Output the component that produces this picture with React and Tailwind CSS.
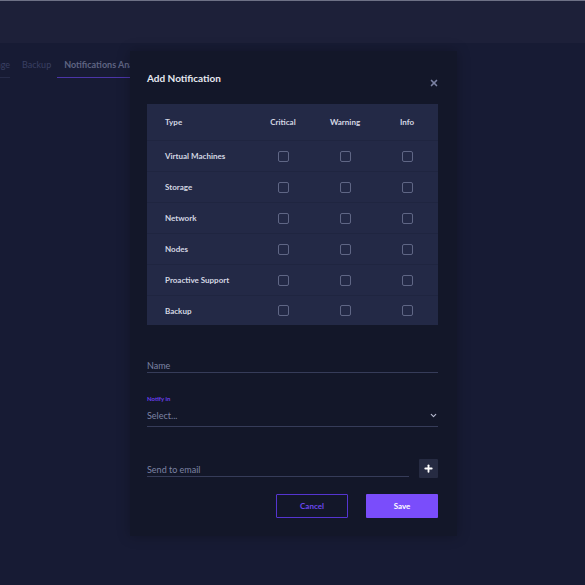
import { ChevronDown, Plus, X } from 'lucide-react'

const types = ['Virtual Machines', 'Storage', 'Network', 'Nodes', 'Proactive Support', 'Backup']

function Box() {
  return <div className="w-[11px] h-[11px] rounded-[2px] border border-[#5f6685]" />
}

export default function App() {
  return (
    <div className="relative w-[585px] h-[585px] overflow-hidden bg-[#171b34] font-['Lato',sans-serif]">
      {/* page header */}
      <div className="h-[1px] bg-[#6e7186]" />
      <div className="h-[42px] bg-[#1d2039]" />

      {/* tabs */}
      <div className="flex items-end h-[35px]">
        <div className="flex flex-col -ml-[20px]">
          <span className="text-[9px] text-[#3a4063] pb-[6px]">Storage</span>
          <div className="h-[1px] bg-[#262b48]" />
        </div>
        <span className="text-[9px] text-[#3a4063] ml-[12px] pb-[7px]">Backup</span>
        <div className="flex flex-col ml-[6px]">
          <span className="text-[9px] font-bold text-[#5f6482] px-[7px] pb-[6px] whitespace-nowrap">Notifications Analytics</span>
          <div className="h-[1px] bg-[#4b35a8]" />
        </div>
      </div>

      {/* modal */}
      <div className="absolute left-[130px] top-[51px] w-[327px] h-[485px] bg-[#131729] pl-[17px] pr-[19px] shadow-[0_0_12px_rgba(0,0,0,0.25)]">
        <div className="flex justify-between h-[53px]">
          <h2 className="text-[10px] font-bold text-[#e6e8f0] pt-[20px]">Add Notification</h2>
          <X className="w-[10px] h-[10px] mt-[27px] -mr-[1px] text-[#7b82a3]" strokeWidth={4} />
        </div>

        <div className="bg-[#232946] text-[8px] font-bold text-[#d4d7e3]">
          <div className="grid grid-cols-[105px_62px_62px_62px] h-[37px] items-center border-b border-[#1f2540]">
            <span className="pl-[18px]">Type</span>
            <span className="text-center">Critical</span>
            <span className="text-center">Warning</span>
            <span className="text-center">Info</span>
          </div>
          {types.map((t, i) => (
            <div
              key={t}
              className={`grid grid-cols-[105px_62px_62px_62px] items-center ${i < 5 ? 'h-[31px] border-b border-[#1f2540]' : 'h-[29px]'}`}
            >
              <span className="pl-[18px] whitespace-nowrap">{t}</span>
              <div className="flex justify-center"><Box /></div>
              <div className="flex justify-center"><Box /></div>
              <div className="flex justify-center"><Box /></div>
            </div>
          ))}
        </div>

        {/* name */}
        <div className="mt-[33px] border-b border-[#363c59] pb-[1px] leading-[10px]">
          <span className="text-[9px] text-[#7d83a3]">Name</span>
        </div>

        {/* notify in */}
        <div className="mt-[21px]">
          <div className="text-[6px] font-bold text-[#6a3ff0]">Notify in</div>
          <div className="flex items-center justify-between border-b border-[#363c59] mt-[6px] pb-[3px]">
            <span className="text-[9px] text-[#7d83a3]">Select...</span>
            <ChevronDown className="w-[9px] h-[9px] text-[#b6bad0]" strokeWidth={3} />
          </div>
        </div>

        {/* email */}
        <div className="flex items-end gap-[10px] mt-[32px]">
          <div className="flex-1 border-b border-[#363c59] pb-[1px] mb-[1px] leading-[10px]">
            <span className="text-[9px] text-[#7d83a3]">Send to email</span>
          </div>
          <button className="w-[19px] h-[19px] bg-[#262b42] flex items-center justify-center rounded-[1px]">
            <Plus className="w-[11px] h-[11px] text-white" strokeWidth={4} />
          </button>
        </div>

        {/* actions */}
        <div className="flex justify-end gap-[18px] mt-[16px]">
          <button className="w-[72px] h-[24px] border border-[#5535d0] text-[#6b47f0] text-[8px] font-bold rounded-[1px]">Cancel</button>
          <button className="w-[72px] h-[24px] bg-[#7a4dfb] text-white text-[8px] font-bold rounded-[1px]">Save</button>
        </div>
      </div>
    </div>
  )
}
